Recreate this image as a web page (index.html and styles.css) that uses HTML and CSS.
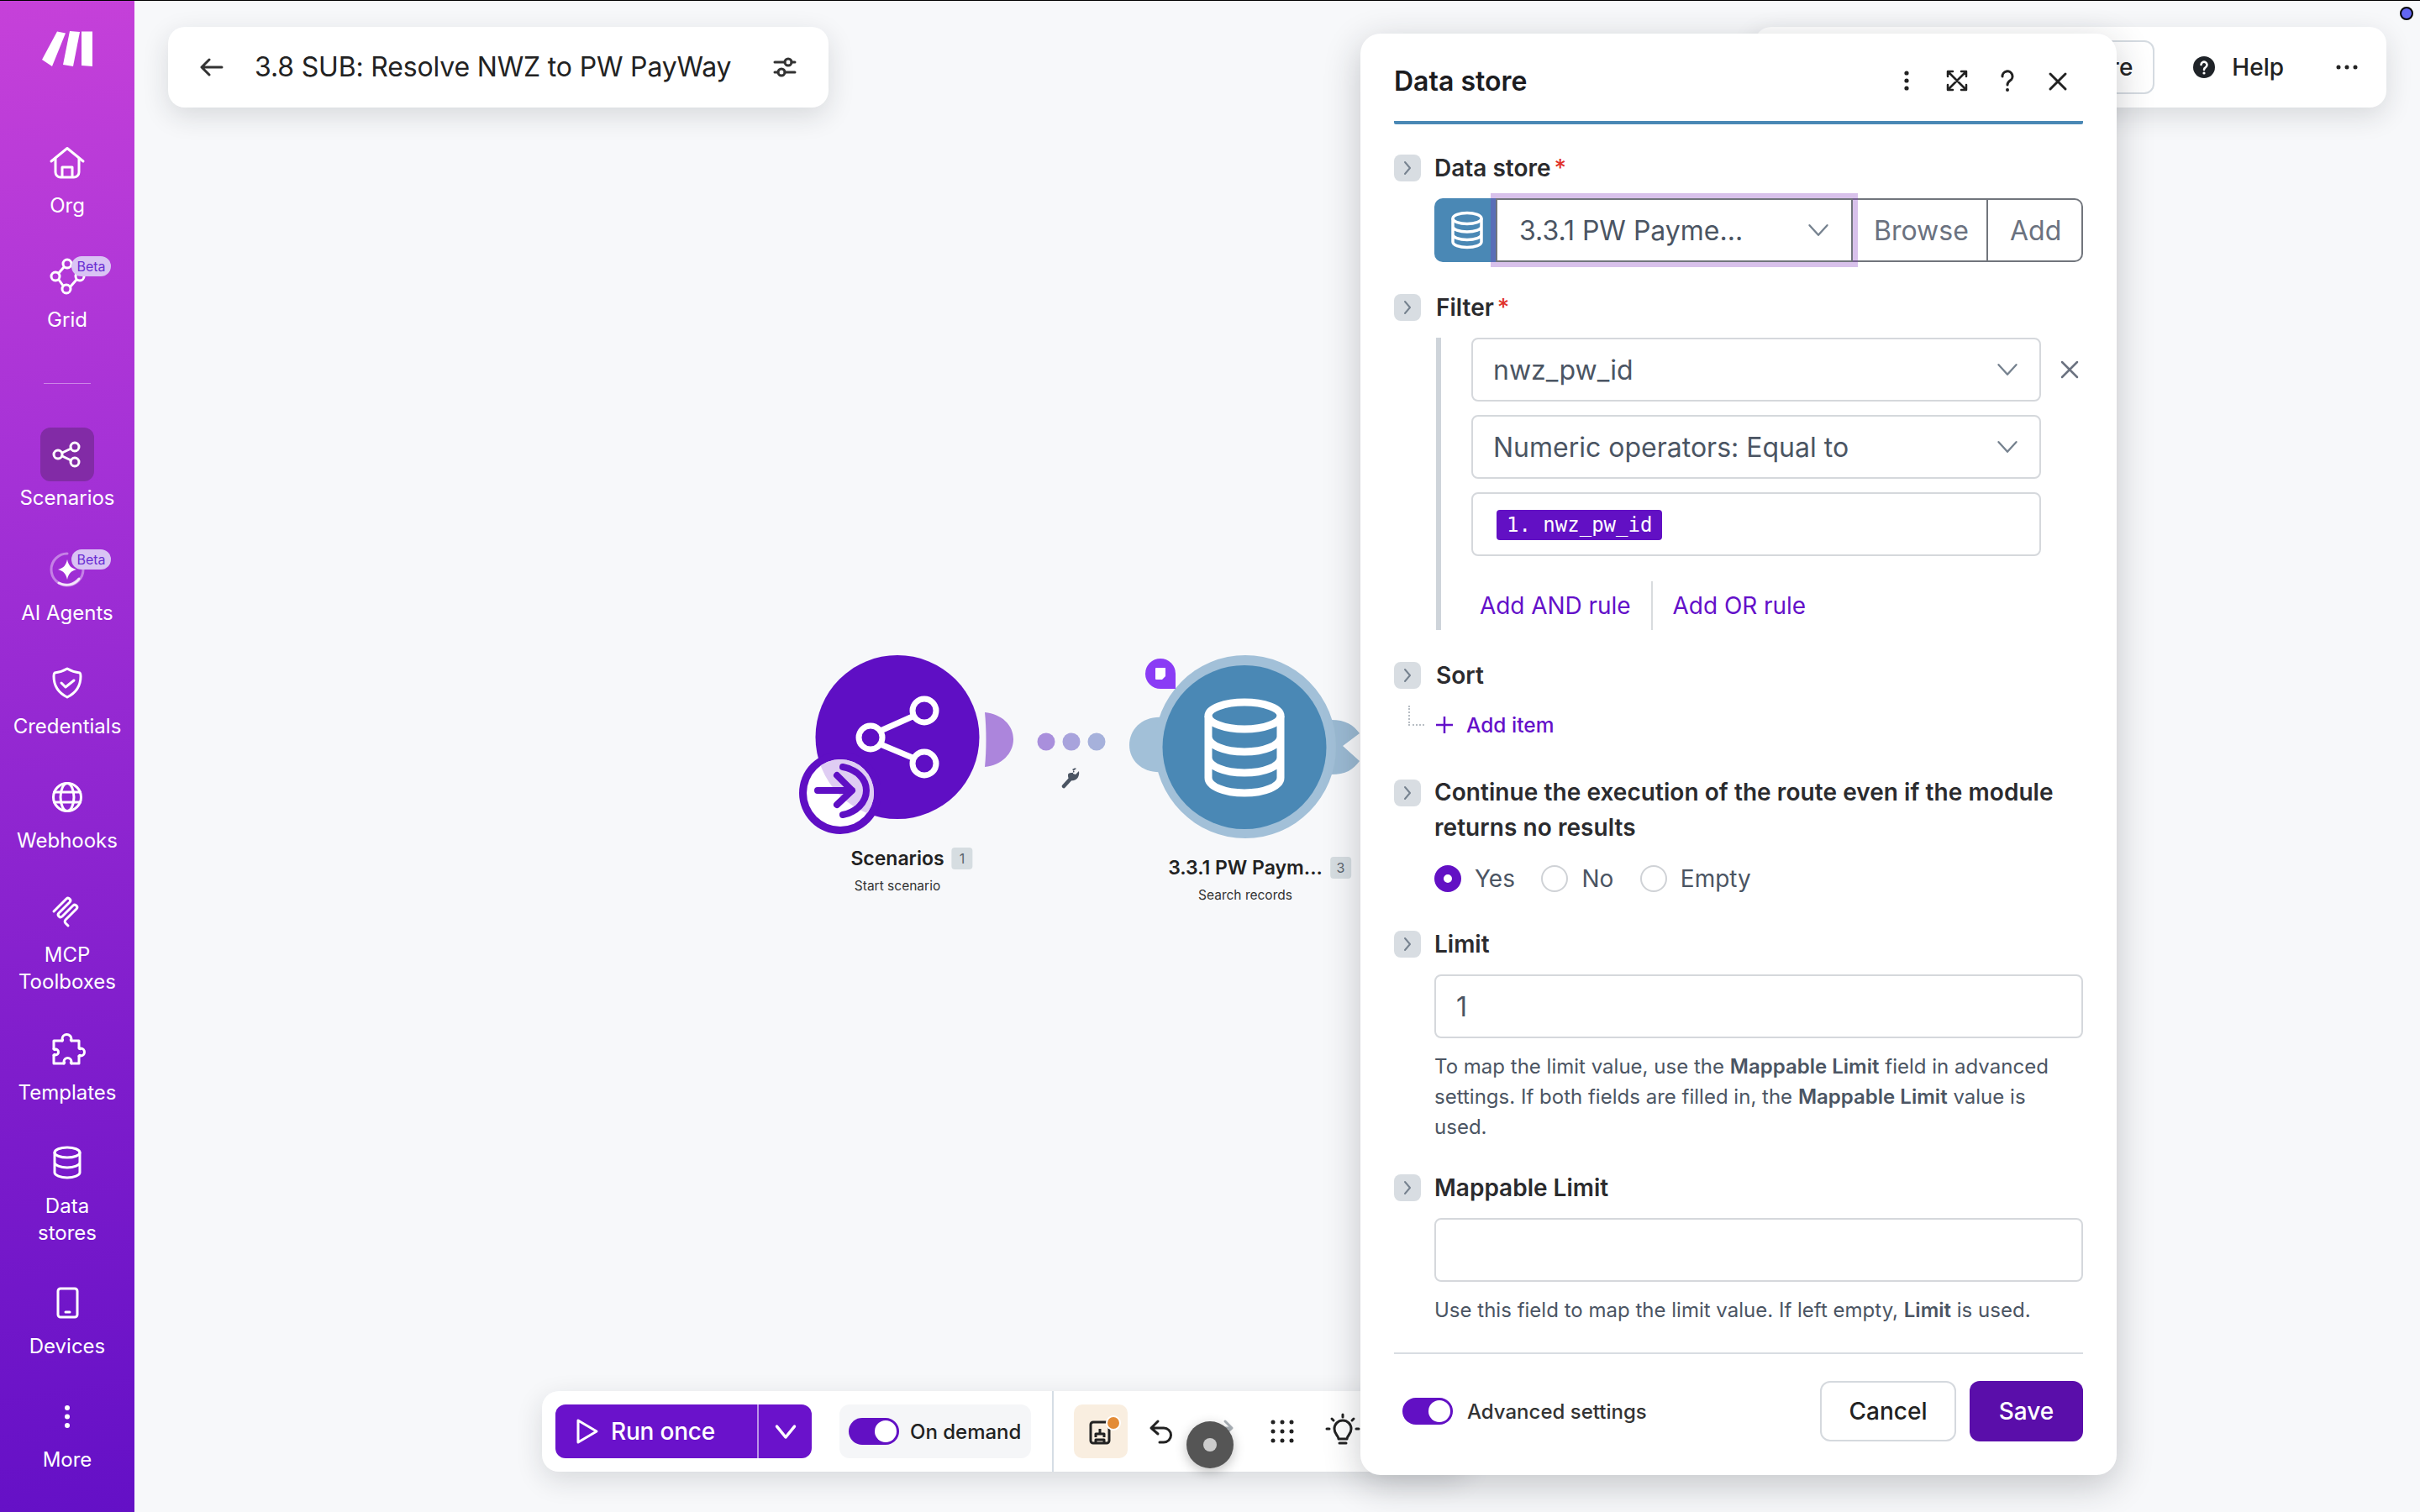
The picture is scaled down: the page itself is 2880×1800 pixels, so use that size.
FILE: index.html
```html
<!DOCTYPE html>
<html lang="en">
<head>
<meta charset="utf-8">
<title>3.8 SUB: Resolve NWZ to PW PayWay</title>
<link rel="stylesheet" href="styles.css">
</head>
<body>
<div class="topline"></div>
<div class="indicator"></div>
<div class="app">
  <nav class="sidebar">
    <div class="logo-row">
      <svg class="logo" viewBox="50 37 60 42"><path d="M50 71 68 37.500 78 39.500 62 79Z"/><path d="M83 37 95 38 87 79 75 77Z"/><path d="M97 37.500H110V79L97 78Z"/></svg>
    </div>
    <a class="nav-item">
      <span class="nav-icon"><svg viewBox="0 0 48 48"><path d="M5 23 24 7.500 43 23"/><path d="M10 20v16a6 6 0 0 0 6 6h16a6 6 0 0 0 6-6V20"/><path d="M18 41V30h12v11"/></svg></span>
      <span class="nav-label">Org</span>
    </a>
    <a class="nav-item">
      <span class="nav-icon"><svg viewBox="0 0 48 48"><circle cx="24" cy="9" r="5"/><circle cx="10" cy="24" r="5"/><circle cx="23" cy="39" r="5"/><circle cx="39" cy="24" r="5"/><path d="M20 13 14 20M14 28l5 7M28 36l7-8"/></svg><span class="beta">Beta</span></span>
      <span class="nav-label">Grid</span>
    </a>
    <div class="nav-sep"><span></span></div>
    <a class="nav-item">
      <span class="nav-icon active"><svg viewBox="0 0 48 48"><circle cx="33" cy="15" r="5"/><circle cx="13" cy="24" r="5"/><circle cx="33" cy="33" r="5"/><path d="M18 22 28.500 17M18 26l10.500 5"/></svg></span>
      <span class="nav-label">Scenarios</span>
    </a>
    <a class="nav-item">
      <span class="nav-icon"><svg viewBox="0 0 48 48"><path class="faded" d="M24 5a19 19 0 1 0 19 19"/><path class="half" d="M14 40a19 19 0 0 0 24-5"/><path class="filled" d="M24 12c1.500 7 4 10 11 12-7 2-9.500 5-11 12-1.500-7-4-10-11-12 7-2 9.500-5 11-12Z"/></svg><span class="beta">Beta</span></span>
      <span class="nav-label">AI Agents</span>
    </a>
    <a class="nav-item">
      <span class="nav-icon"><svg viewBox="0 0 48 48"><path d="M24 7c5 3 10 4.500 15 5 1 1 1 2 1 4 0 12-6 20-16 25C14 36 8 28 8 16c0-2 0-3 1-4 5-.5 10-2 15-5Z"/><path d="M17 24l5 5 10-8"/></svg></span>
      <span class="nav-label">Credentials</span>
    </a>
    <a class="nav-item">
      <span class="nav-icon"><svg viewBox="0 0 48 48"><circle cx="24" cy="24" r="16.500"/><ellipse cx="24" cy="24" rx="8" ry="16.500"/><path d="M8.500 18h31M8.500 30h31"/></svg></span>
      <span class="nav-label">Webhooks</span>
    </a>
    <a class="nav-item">
      <span class="nav-icon"><svg viewBox="0 0 48 48"><path d="M8 24 23 9a2.830 2.830 0 0 1 4 4L14 26a2.830 2.830 0 0 0 4 4L31 17a2.830 2.830 0 0 1 4 4L22 34a2.830 2.830 0 0 0 0 4l3 3"/></svg></span>
      <span class="nav-label">MCP<br>Toolboxes</span>
    </a>
    <a class="nav-item">
      <span class="nav-icon"><svg viewBox="0 0 48 48"><path d="M8 14h9a1 1 0 0 0 1-2 5.500 5.500 0 1 1 11 0 1 1 0 0 0 1 2h8v8a1 1 0 0 0 2 1 4.500 4.500 0 1 1 0 9 1 1 0 0 0-2 1v8h-8a1 1 0 0 1-1-2 4.500 4.500 0 1 0-9 0 1 1 0 0 1-1 2H8v-9a1 1 0 0 1 2-1 3.500 3.500 0 1 0 0-7 1 1 0 0 1-2-1Z"/></svg></span>
      <span class="nav-label">Templates</span>
    </a>
    <a class="nav-item">
      <span class="nav-icon"><svg viewBox="0 0 48 48"><ellipse cx="24" cy="12" rx="15" ry="6"/><path d="M9 12v24c0 3 7 6 15 6s15-3 15-6V12M9 24c0 3 7 6 15 6s15-3 15-6"/></svg></span>
      <span class="nav-label">Data<br>stores</span>
    </a>
    <a class="nav-item">
      <span class="nav-icon"><svg viewBox="0 0 48 48"><rect x="13" y="7" width="23" height="34" rx="3"/><path d="M22 35h5"/></svg></span>
      <span class="nav-label">Devices</span>
    </a>
    <a class="nav-item">
      <span class="nav-icon"><svg viewBox="0 0 48 48"><circle class="filled" cx="24" cy="14" r="3"/><circle class="filled" cx="24" cy="24.500" r="3"/><circle class="filled" cx="24" cy="35" r="3"/></svg></span>
      <span class="nav-label">More</span>
    </a>
  </nav>

  <main class="canvas">
    <svg class="graph" viewBox="900 760 740 260">
      <defs>
        <clipPath id="trigger-clip"><circle cx="1000" cy="944" r="40"/></clipPath>
      </defs>
      <path d="M1172 848c20 2 34 15 34 32s-14 31-34 33c2-20 2-45 0-65Z" fill="#ac85dc"/>
      <circle cx="1068" cy="877.500" r="97.500" fill="#5f0fc4"/>
      <circle cx="1000" cy="944" r="49" fill="#5f0fc4"/>
      <circle cx="1000" cy="944" r="40" fill="#fff"/>
      <circle cx="1068" cy="877.500" r="97.500" fill="#dfcdf3" clip-path="url(#trigger-clip)"/>
      <path d="M973 941h41M996 923l18 18-18 17" fill="none" stroke="#5f0fc4" stroke-width="8" stroke-linecap="round" stroke-linejoin="round"/>
      <path d="M1003 913c16 3 28 14 28 28s-12 26-28 29" fill="none" stroke="#5f0fc4" stroke-width="8" stroke-linecap="round"/>
      <g fill="none" stroke="#fff" stroke-width="7" stroke-linecap="round">
        <circle cx="1100" cy="846" r="14"/><circle cx="1036" cy="878" r="14"/><circle cx="1100" cy="909" r="14"/>
        <path d="M1050 869 1086 853M1050 887l36 15"/>
      </g>
      <circle cx="1245" cy="883" r="10.500" fill="#a98fdc"/>
      <circle cx="1275" cy="883" r="10.500" fill="#a8a3dc"/>
      <circle cx="1305" cy="883" r="10.500" fill="#a6b1db"/>
      <path d="M1266 936 1276 925" stroke="#4b5563" stroke-width="4.500" stroke-linecap="round"/>
      <path d="M1282 919c-4 2-8 0-8 4 0 5 3 7 7 6 4-1 7-5 6-11l-4 4-3-1 0-3 4-3c-2-1-3 0-5 1" fill="#4b5563" transform="translate(-3 0)"/>
      <path d="M1384 854c-24-2-40 14-40 33s16 34 40 32Z" fill="#a2c0d8"/>
      <path d="M1580 857c20-1 30 5 38 16l-20 15 20 18c-8 11-18 17-38 16Z" fill="#9bbad3"/>
      <ellipse cx="1482" cy="889" rx="108" ry="109" fill="#a2c0d8"/>
      <circle cx="1481" cy="889.500" r="97.500" fill="#4a88b5"/>
      <g fill="none" stroke="#fff" stroke-width="9">
        <ellipse cx="1481" cy="852" rx="43" ry="16"/>
        <path d="M1438 852v74c0 10 19 18 43 18s43-8 43-18v-74M1438 877c0 10 19 18 43 18s43-8 43-18M1438 902c0 10 19 18 43 18s43-8 43-18"/>
      </g>
      <path d="M1381 784a18 18 0 0 1 18 18v18h-18a18 18 0 0 1 0-36Z" fill="#8a3cf5"/>
      <path d="M1376 795h11v10l-4 4h-7a1 1 0 0 1-1-1v-12a1 1 0 0 1 1-1Z" fill="#fff"/>
    </svg>

    <div class="node-label node-a">
      <div class="node-title"><span>Scenarios</span><span class="node-count">1</span></div>
      <div class="node-sub">Start scenario</div>
    </div>
    <div class="node-label node-b">
      <div class="node-title"><span>3.3.1 PW Paym...</span><span class="node-count">3</span></div>
      <div class="node-sub">Search records</div>
    </div>

    <header class="card title-card">
      <svg class="ic-32" viewBox="0 0 32 32"><path d="M28 16H5M13 7l-9 9 9 9"/></svg>
      <h1 class="scenario-title">3.8 SUB: Resolve NWZ to PW PayWay</h1>
      <svg class="ic-32" viewBox="0 0 32 32"><path d="M4 10h12M24 10h4M4 22h4M16 22h12"/><circle cx="20" cy="10" r="4"/><circle cx="12" cy="22" r="4"/></svg>
    </header>

    <div class="card top-actions">
      <button class="share-btn">Share</button>
      <svg class="help-ic" viewBox="0 0 26 26"><circle cx="13" cy="13" r="13" fill="#1f2328"/><path d="M9.500 10a3.500 3.500 0 1 1 5.500 3c-1.500 1-2 1.500-2 3" fill="none" stroke="#fff" stroke-width="2.600" stroke-linecap="round"/><circle cx="13" cy="20" r="1.600" fill="#fff"/></svg>
      <span class="help-text">Help</span>
      <svg class="dots-ic" viewBox="0 0 28 8"><circle cx="4" cy="4" r="2.500"/><circle cx="14" cy="4" r="2.500"/><circle cx="24" cy="4" r="2.500"/></svg>
    </div>

    <div class="card toolbar">
      <div class="run-btn">
        <span class="run-main">
          <svg class="play-ic" viewBox="0 0 28 32"><path d="M3 3v26L25 16Z"/></svg>
          Run once
        </span>
        <span class="run-caret"><svg viewBox="0 0 24 24"><path d="M3 7l9 11 9-11"/></svg></span>
      </div>
      <div class="demand">
        <span class="toggle"><span class="knob"></span></span>
        <span class="demand-text">On demand</span>
      </div>
      <div class="tool-sep"></div>
      <div class="tile">
        <svg viewBox="0 0 32 32"><rect x="4" y="5" width="22" height="25" rx="3"/><path d="M10 23v-4h10v4M15 19v-6M10 30v-4h10v4"/></svg>
        <span class="tile-dot"></span>
      </div>
      <div class="tools">
        <svg class="tool-ic" viewBox="0 0 48 48"><path d="M20 12l-8 8 8 7M12 20h15a8.500 8.500 0 0 1 0 17h-5"/></svg>
        <svg class="tool-ic muted" viewBox="0 0 48 48"><path d="M28 12l8 8-8 7M36 20H21a8.500 8.500 0 0 0 0 17h5"/></svg>
        <svg class="tool-ic dotted" viewBox="0 0 48 48"><circle cx="13" cy="13" r="2.500"/><circle cx="24" cy="13" r="2.500"/><circle cx="35" cy="13" r="2.500"/><circle cx="13" cy="24" r="2.500"/><circle cx="24" cy="24" r="2.500"/><circle cx="35" cy="24" r="2.500"/><circle cx="13" cy="35" r="2.500"/><circle cx="24" cy="35" r="2.500"/><circle cx="35" cy="35" r="2.500"/></svg>
        <svg class="tool-ic" viewBox="0 0 48 48"><path d="M19 33c0-4-5-5-5-12a10 10 0 0 1 20 0c0 7-5 8-5 12ZM20 38h8M24 4v3M8 21H5M43 21h-3M11 9l2 2M37 9l-2 2"/></svg>
      </div>
    </div>
    <div class="record"><span></span></div>

    <aside class="panel">
      <div class="panel-head">
        <h2 class="panel-title">Data store</h2>
        <div class="head-icons">
          <svg viewBox="0 0 32 32"><circle class="fill-dark" cx="16" cy="7" r="2.600"/><circle class="fill-dark" cx="16" cy="16" r="2.600"/><circle class="fill-dark" cx="16" cy="25" r="2.600"/></svg>
          <svg class="thin" viewBox="0 0 32 32"><path d="M5 11V5h6M21 5h6v6M27 21v6h-6M11 27H5v-6M6 6l20 20M26 6 6 26"/></svg>
          <svg viewBox="0 0 32 32"><path d="M10 11a6 6 0 1 1 9 5c-2 1.500-3 2.500-3 5"/><circle class="fill-dark" cx="16" cy="27" r="2"/></svg>
          <svg viewBox="0 0 32 32"><path d="M7 8l18 18M25 8 7 26"/></svg>
        </div>
      </div>

      <div class="field-head first">
        <span class="chev"><svg viewBox="0 0 32 32"><path d="M13 9l6 7-6 7"/></svg></span>
        <span class="field-label">Data store<sup class="req">*</sup></span>
      </div>
      <div class="store-group">
        <span class="store-icon"><svg viewBox="0 0 48 48"><ellipse cx="24" cy="10" rx="17" ry="6.500"/><path d="M7 10v28c0 3.500 7.500 6.500 17 6.500s17-3 17-6.500V10M7 19.500c0 3.500 7.500 6.500 17 6.500s17-3 17-6.500M7 29c0 3.500 7.500 6.500 17 6.500s17-3 17-6.500"/></svg></span>
        <span class="store-select">
          <span>3.3.1 PW Payme...</span>
          <svg class="select-chev" viewBox="0 0 24 24"><path d="M3 7l9 10 9-10"/></svg>
        </span>
        <span class="store-btn browse">Browse</span>
        <span class="store-btn add">Add</span>
      </div>

      <div class="field-head gap38">
        <span class="chev"><svg viewBox="0 0 32 32"><path d="M13 9l6 7-6 7"/></svg></span>
        <span class="field-label wide">Filter<sup class="req">*</sup></span>
      </div>
      <div class="filter-body">
        <div class="rule-row">
          <div class="input select"><span>nwz_pw_id</span><svg class="select-chev" viewBox="0 0 24 24"><path d="M3 7l9 10 9-10"/></svg></div>
          <svg class="rule-x" viewBox="0 0 24 24"><path d="M3 3l18 18M21 3 3 21"/></svg>
        </div>
        <div class="input select narrow"><span>Numeric operators: Equal to</span><svg class="select-chev" viewBox="0 0 24 24"><path d="M3 7l9 10 9-10"/></svg></div>
        <div class="input narrow tagged"><span class="tag">1. nwz_pw_id</span></div>
        <div class="rule-actions">
          <a class="rule-link">Add AND rule</a>
          <a class="rule-link">Add OR rule</a>
        </div>
      </div>

      <div class="field-head gap38">
        <span class="chev"><svg viewBox="0 0 32 32"><path d="M13 9l6 7-6 7"/></svg></span>
        <span class="field-label wide">Sort</span>
      </div>
      <div class="add-item">
        <span class="tree"></span>
        <svg class="plus" viewBox="0 0 20 20"><path d="M10 0v20M0 10h20"/></svg>
        <span>Add item</span>
      </div>

      <div class="field-head multi">
        <span class="chev"><svg viewBox="0 0 32 32"><path d="M13 9l6 7-6 7"/></svg></span>
        <span class="field-label">Continue the execution of the route even if the module returns no results</span>
      </div>
      <div class="radios">
        <span class="radio on"></span><span class="radio-text">Yes</span>
        <span class="radio"></span><span class="radio-text">No</span>
        <span class="radio"></span><span class="radio-text">Empty</span>
      </div>

      <div class="field-head gap46">
        <span class="chev"><svg viewBox="0 0 32 32"><path d="M13 9l6 7-6 7"/></svg></span>
        <span class="field-label">Limit</span>
      </div>
      <div class="input full value-gap"><span>1</span></div>
      <p class="help">To map the limit value, use the <b>Mappable Limit</b> field in advanced settings. If both fields are filled in, the <b>Mappable Limit</b> value is used.</p>

      <div class="field-head gap38">
        <span class="chev"><svg viewBox="0 0 32 32"><path d="M13 9l6 7-6 7"/></svg></span>
        <span class="field-label">Mappable Limit</span>
      </div>
      <div class="input full value-gap"></div>
      <p class="help">Use this field to map the limit value. If left empty, <b>Limit</b> is used.</p>

      <div class="panel-foot">
        <span class="toggle adv"><span class="knob"></span></span>
        <span class="adv-text">Advanced settings</span>
        <button class="btn cancel">Cancel</button>
        <button class="btn save">Save</button>
      </div>
    </aside>
  </main>
</div>
</body>
</html>
```

FILE: styles.css
```css
* { box-sizing: border-box; }
html, body { margin: 0; padding: 0; height: 100%; }
body { font-family: Inter, "Liberation Sans", sans-serif; background: #f7f8fa; color: #222; overflow: hidden; }
svg { display: block; }
h1, h2, p { margin: 0; }

.topline { position: absolute; left: 0; top: 0; width: 100%; height: 1px; background: #000; z-index: 20; }
.indicator { position: absolute; right: 8px; top: 8px; width: 16px; height: 16px; border-radius: 50%; background: #6366f1; border: 2px solid #000; z-index: 20; }
.app { display: flex; height: 1800px; }

/* sidebar */
.sidebar {
  width: 160px; flex: none; height: 100%;
  display: grid;
  grid-template-rows: 162px 136px 136px 75px 138px 135px 136px 136px 164px 135px 167px 135px 145px;
  justify-items: center;
  background: linear-gradient(170deg, #c641d9 0%, #a431d6 32%, #7f1dcc 70%, #6410c6 100%);
  color: #fff;
}
.logo-row { width: 100%; padding: 37px 0 0 50px; }
.logo { width: 60px; height: 42px; fill: #fff; }
.nav-item { display: flex; flex-direction: column; align-items: center; gap: 4px; width: 100%; }
.nav-icon { position: relative; width: 64px; height: 64px; margin-top: -1px; display: flex; align-items: center; justify-content: center; border-radius: 12px; }
.nav-icon.active { background: #822ba6; margin-top: 0; }
.nav-icon svg { width: 48px; height: 48px; fill: none; stroke: #fff; stroke-width: 3; stroke-linecap: round; stroke-linejoin: round; }
.nav-icon svg .filled { fill: #fff; stroke: none; }
.nav-icon svg .faded { stroke: rgba(255,255,255,.4); }
.nav-icon svg .half { stroke: rgba(255,255,255,.8); }
.nav-label { font-size: 24px; line-height: 32px; text-align: center; }
.beta { position: absolute; left: 37px; top: 8px; width: 47px; height: 24px; border-radius: 12px; background: #d9c3f4; color: #6a2ed2; font-size: 16px; line-height: 24px; text-align: center; }
.nav-sep { width: 100%; padding-top: 22px; display: flex; justify-content: center; }
.nav-sep span { display: block; width: 56px; height: 1px; background: rgba(255,255,255,.4); }

/* canvas */
.canvas { position: relative; flex: 1; height: 100%; }
.graph { position: absolute; left: 740px; top: 760px; width: 740px; height: 260px; }
.node-label { position: absolute; text-align: center; transform: translateX(-50%); }
.node-a { left: 908px; top: 1007px; }
.node-b { left: 1322px; top: 1018px; }
.node-title { display: flex; align-items: center; justify-content: center; position: relative; font-size: 23px; line-height: 30px; font-weight: 600; color: #222; white-space: nowrap; }
.node-count { position: absolute; left: 100%; margin-left: 9px; width: 25px; height: 26px; border-radius: 4px; background: #d6dde1; color: #59636d; font-size: 16px; font-weight: 400; line-height: 26px; text-align: center; }
.node-sub { font-size: 15.500px; line-height: 24px; margin-top: 6px; color: #333; white-space: nowrap; }

.card { position: absolute; background: #fff; border-radius: 20px; box-shadow: 0 10px 32px rgba(30,35,45,.14); }
.title-card { left: 40px; top: 32px; width: 786px; height: 96px; display: flex; align-items: center; padding: 0 36px; }
.ic-32 { width: 32px; height: 32px; flex: none; fill: none; stroke: #333; stroke-width: 3; stroke-linecap: round; stroke-linejoin: round; }
.scenario-title { font-size: 32px; font-weight: 400; line-height: 40px; letter-spacing: -.17px; color: #222; margin-left: 35px; margin-right: auto; white-space: nowrap; }

.top-actions { left: 1928px; top: 32px; width: 752px; height: 96px; display: flex; align-items: center; justify-content: flex-end; padding-right: 33px; }
.share-btn { height: 64px; padding: 0 24px; background: #fff; border: 2px solid #d5dbe1; border-radius: 12px; font: 500 28px Inter, sans-serif; color: #222; margin-right: 46px; }
.help-ic { width: 26px; height: 26px; margin-right: 20px; }
.help-text { font-size: 28px; font-weight: 500; color: #222; margin-right: 61px; }
.dots-ic { width: 28px; height: 8px; fill: #222; }

.toolbar { left: 485px; top: 1656px; width: 1100px; height: 96px; border-radius: 20px; display: flex; align-items: center; padding-left: 16px; }
.run-btn { width: 305px; height: 64px; background: #6a12cb; border-radius: 12px; color: #fff; display: flex; align-items: center; }
.run-main { width: 242px; display: flex; align-items: center; gap: 14px; padding-left: 24px; height: 100%; font-size: 28px; font-weight: 500; letter-spacing: -.2px; border-right: 2px solid rgba(255,255,255,.55); }
.play-ic { width: 28px; height: 32px; fill: none; stroke: #fff; stroke-width: 3; stroke-linejoin: round; }
.run-caret { flex: 1; display: flex; justify-content: center; }
.run-caret svg { width: 28px; height: 28px; fill: none; stroke: #fff; stroke-width: 3; stroke-linecap: round; stroke-linejoin: round; }
.demand { width: 228px; height: 64px; margin-left: 33px; background: #f5f6f8; border-radius: 12px; display: flex; align-items: center; padding-left: 11px; gap: 13px; }
.demand-text { font-size: 24px; font-weight: 500; color: #222; white-space: nowrap; }
.toggle { display: inline-flex; flex: none; width: 60px; height: 32px; border-radius: 16px; background: #6210c4; align-items: center; justify-content: flex-end; padding-right: 3px; }
.knob { width: 26px; height: 26px; border-radius: 50%; background: #fff; }
.tool-sep { width: 2px; height: 100%; background: #d5dde5; margin-left: 25px; }
.tile { position: relative; width: 64px; height: 64px; margin-left: 24px; border-radius: 10px; background: #f9eee0; display: flex; align-items: center; justify-content: center; flex: none; }
.tile svg { width: 32px; height: 32px; fill: none; stroke: #222; stroke-width: 3; stroke-linejoin: round; }
.tile-dot { position: absolute; left: 40px; top: 15px; width: 14px; height: 14px; border-radius: 50%; background: #e38b36; box-shadow: 0 0 0 2px #fff; }
.tools { display: flex; gap: 24px; margin-left: 16px; }
.tool-ic { width: 48px; height: 48px; fill: none; stroke: #222; stroke-width: 3; stroke-linecap: round; stroke-linejoin: round; }
.tool-ic.muted { stroke: #a9b0b6; }
.tool-ic.dotted { fill: #222; stroke: none; }
.record { position: absolute; left: 1252px; top: 1692px; width: 56px; height: 56px; border-radius: 50%; background: #555; box-shadow: 0 4px 14px rgba(0,0,0,.25); display: flex; align-items: center; justify-content: center; }
.record span { width: 16px; height: 16px; border-radius: 50%; background: #ccc; }

/* panel */
.panel { position: absolute; left: 1459px; top: 40px; width: 900px; height: 1716px; background: #fff; border-radius: 24px; box-shadow: 0 12px 44px rgba(30,32,40,.24); padding: 0 40px; }
.panel-head { height: 108px; padding-top: 8px; border-bottom: 4px solid #4a88b5; display: flex; align-items: center; justify-content: space-between; border-radius: 0 0 2px 2px; }
.panel-title { font-size: 32px; font-weight: 600; color: #1c1c1f; }
.head-icons { display: flex; gap: 28px; margin-right: -46px; padding-right: 60px; }
.head-icons svg { width: 32px; height: 32px; fill: none; stroke: #222; stroke-width: 3; stroke-linecap: round; stroke-linejoin: round; }
.head-icons svg.thin { stroke-width: 2.500; }
.head-icons .fill-dark { fill: #222; stroke: none; }

.field-head { display: flex; align-items: center; gap: 16px; height: 32px; }
.field-head.first { margin-top: 36px; }
.field-head.gap38 { margin-top: 38px; }
.field-head.gap46 { margin-top: 46px; }
.field-head.multi { margin-top: 36px; align-items: flex-start; height: 84px; }
.field-head.multi .chev { margin-top: 6px; }
.field-head.multi .field-label { line-height: 42px; letter-spacing: .06px; }
.chev { width: 32px; height: 32px; flex: none; border-radius: 8px; background: #d8dde2; }
.chev svg { width: 32px; height: 32px; fill: none; stroke: #76828f; stroke-width: 2; stroke-linecap: round; stroke-linejoin: round; }
.field-label { font-size: 28px; font-weight: 600; line-height: 32px; color: #2b2b2e; }
.field-label.wide { margin-left: 2px; }
.req { color: #e0322a; font-size: 28px; line-height: 0; font-weight: 500; vertical-align: baseline; margin-left: 4px; }

.store-group { margin: 20px 0 0 48px; height: 76px; display: flex; color: #4b5563; font-size: 32px; }
.store-icon { width: 73px; padding-left: 4px; background: #4a88b5; border-radius: 10px 0 0 10px; display: flex; align-items: center; justify-content: center; flex: none; }
.store-icon svg { width: 48px; height: 48px; fill: none; stroke: #fff; stroke-width: 3.500; }
.store-select { position: relative; z-index: 1; width: 425px; border: 2px solid #71757c; outline: 6px solid rgba(126,50,190,.3); display: flex; align-items: center; justify-content: space-between; padding: 0 25px 0 26px; }
.select-chev { width: 28px; height: 28px; fill: none; stroke: #76828f; stroke-width: 2; stroke-linecap: round; stroke-linejoin: round; flex: none; }
.store-btn { border: 2px solid #71757c; border-left: 0; display: flex; align-items: center; color: #6b7280; }
.store-btn.browse { width: 161px; padding-left: 25px; }
.store-btn.add { width: 113px; padding-left: 26px; border-radius: 0 10px 10px 0; }

.input { height: 76px; border: 2px solid #d5d8dc; border-radius: 8px; display: flex; align-items: center; font-size: 32px; color: #4b5563; padding: 0 24px; }
.input.select { justify-content: space-between; }
.input.narrow { width: 678px; margin-top: 16px; }
.input.full { margin: 20px 0 0 48px; }
.filter-body { margin: 20px 0 0 50px; border-left: 6px solid #ced4da; padding-left: 36px; height: 348px; }
.rule-row { display: flex; align-items: center; }
.rule-row .input { width: 678px; flex: none; }
.rule-x { width: 24px; height: 24px; margin-left: 22px; fill: none; stroke: #6b7280; stroke-width: 2.500; stroke-linecap: round; }
.input.tagged { padding: 2px 28px 0; }
.tag { height: 36px; background: #6210c4; border-radius: 4px; color: #fff; font: 24px/36px "DejaVu Sans Mono", monospace; padding: 0 12px; }
.rule-actions { display: flex; margin-top: 30px; height: 58px; align-items: center; margin-left: 10px; }
.rule-link { font-size: 28px; color: #6410c9; letter-spacing: -.05px; }
.rule-link:first-child { padding-right: 24px; border-right: 2px solid #d8dbde; line-height: 58px; }
.rule-link:last-child { padding-left: 24px; }

.add-item { position: relative; height: 46px; margin: 20px 0 0 50px; display: flex; align-items: center; font-size: 24.500px; font-weight: 500; color: #6410c9; gap: 16px; }
.plus { width: 20px; height: 20px; fill: none; stroke: #6410c9; stroke-width: 2.500; }
.tree { position: absolute; left: -33px; top: 0; width: 19px; height: 24px; border-left: 2px dotted #b8bec4; border-bottom: 2px dotted #b8bec4; }

.radios { display: flex; align-items: center; margin: 24px 0 0 48px; height: 32px; font-size: 28px; color: #4b5563; }
.radio { width: 32px; height: 32px; border-radius: 50%; border: 2px solid #cfd2d6; flex: none; }
.radio.on { border: 11px solid #6210c4; background: #fff; }
.radio-text { margin: 0 31.500px 0 16px; }

.help { font-size: 24px; line-height: 36px; color: #4b5563; margin: 16px 0 0 48px; letter-spacing: .01px; }
.help b { font-weight: 600; }

.panel-foot { margin-top: 32px; border-top: 2px solid #d8dde2; padding-top: 32px; display: flex; align-items: center; }
.toggle.adv { margin-left: 10px; }
.adv-text { font-size: 24px; font-weight: 500; color: #333; margin-left: 17px; margin-right: auto; }
.btn { height: 72px; border-radius: 12px; font: 500 28px Inter, sans-serif; }
.btn.cancel { width: 162px; background: #fff; border: 2px solid #d5d9de; color: #222; margin-right: 16px; }
.btn.save { width: 135px; background: #5a0eaa; border: 0; color: #fff; }
```
